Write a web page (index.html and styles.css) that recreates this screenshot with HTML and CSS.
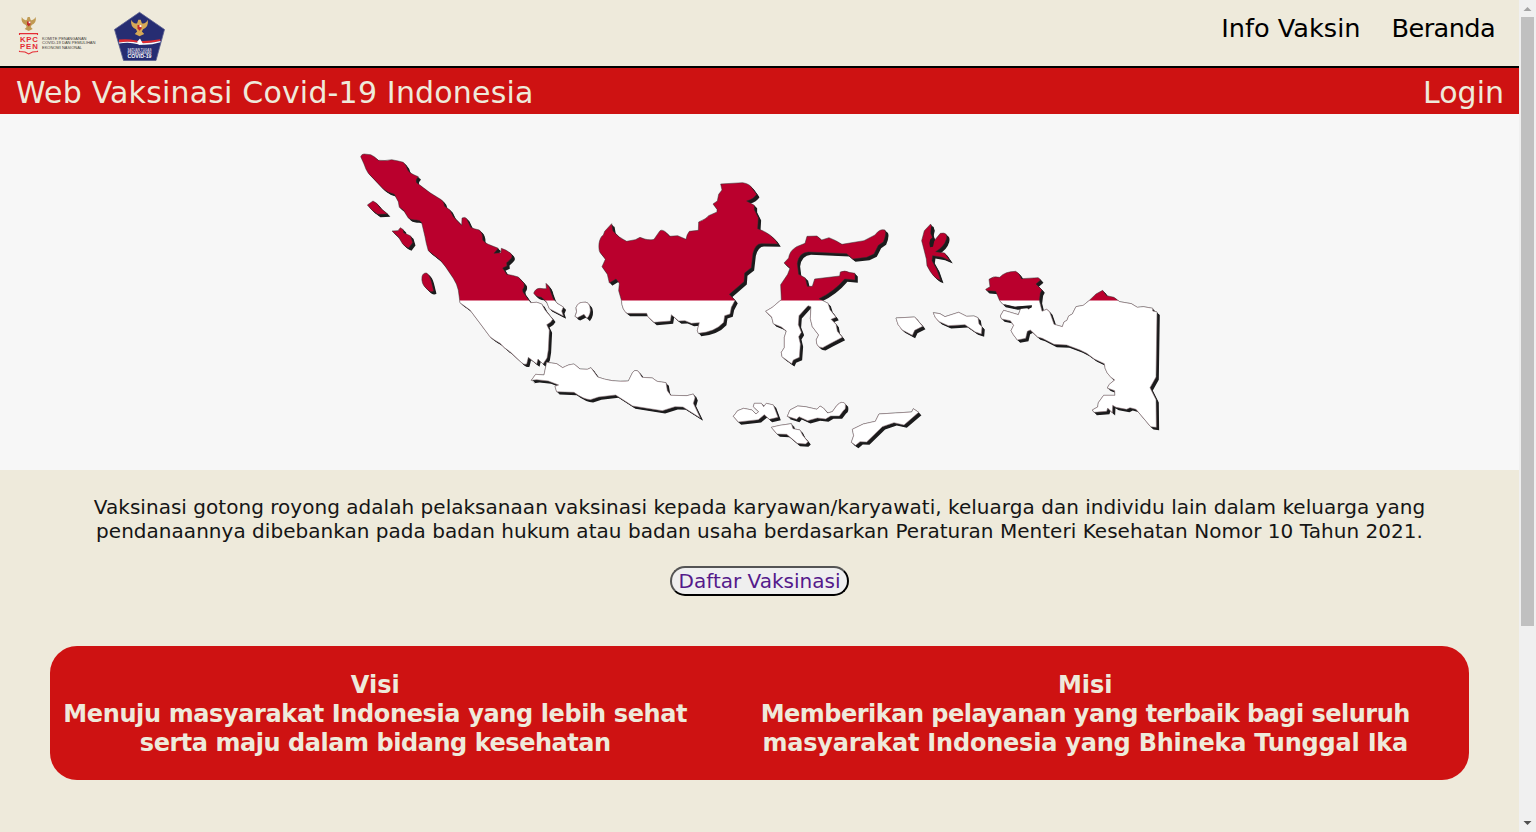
FILE: index.html
```html
<!DOCTYPE html>
<html lang="id">
<head>
<meta charset="utf-8">
<title>Web Vaksinasi Covid-19 Indonesia</title>
<link rel="stylesheet" href="styles.css">
</head>
<body>
<div class="page">
  <header class="top">
    <svg class="logos" width="180" height="66" viewBox="0 0 180 66">
      <defs>
        <g id="garuda">
          <path d="M-7-7Q-8-1-3 1L-2 3L-4 5L0 7L4 5L2 3L3 1Q8-1 7-7Q5-3 2-4L1-7H-1L-2-4Q-5-3-7-7Z"/>
          <path d="M-1.7-2.5H1.7V.5L0 2.4L-1.7 .5Z" fill="#c22b2b"/>
          <path d="M0-2.5H1.7V-.8H0Z" fill="#fff"/>
        </g>
      </defs>
      <use href="#garuda" x="28.7" y="24" fill="#c09a52"/>
      <g class="logo-red">
        <path d="M19.5 35V33.6H37.5V35M19.5 50.8V51.6L25 52L28.7 54L32.500 52L37.500 51.600V50.800" fill="none" stroke="#e52d35" stroke-width="1.1"/>
        <text x="20" y="42" textLength="17.8">KPC</text>
        <text x="20" y="49.2" textLength="17.8">PEN</text>
      </g>
      <g class="logo-caption">
        <text x="42" y="39.6" textLength="44.5" lengthAdjust="spacingAndGlyphs">KOMITE PENANGANAN</text>
        <text x="42" y="44.4" textLength="53.5" lengthAdjust="spacingAndGlyphs">COVID-19 DAN PEMULIHAN</text>
        <text x="42" y="49" textLength="40" lengthAdjust="spacingAndGlyphs">EKONOMI NASIONAL</text>
      </g>
      <path d="M139.5 12.3L164.5 29.5L156 60.5H123.5L114.5 29.5Z" fill="#262d72" stroke="#5b608f" stroke-width=".8"/>
      <use href="#garuda" transform="translate(139.5 28) scale(1.18)" fill="#d5a956"/>
      <path d="M119 39.500Q128 38.500 136 40.500Q145 42 160 39.300L160.500 41Q147 44 139 43Q128 40.500 119 42.600Z" fill="#df2c32"/>
      <path d="M119 42.600Q128 40.500 139 43Q147 44 160.500 41V42.200Q148 46 138 44.300Q129 41.600 119 43.600Z" fill="#fff"/>
      <path d="M137 42L140 38.500L143 44L139 45Z" fill="#fff"/>
      <g class="logo-badge">
        <text x="127.5" y="51.3" textLength="24" lengthAdjust="spacingAndGlyphs">SATUAN TUGAS</text>
        <text x="127.5" y="54.1" textLength="24" lengthAdjust="spacingAndGlyphs">PENANGANAN</text>
        <text class="covid" x="127.5" y="58.3" textLength="24" lengthAdjust="spacingAndGlyphs">COVID-19</text>
      </g>
    </svg>
    <nav class="nav"><a class="info">Info Vaksin</a><a class="home">Beranda</a></nav>
  </header>
  <div class="bar"><span class="brand">Web Vaksinasi Covid-19 Indonesia</span><span class="login">Login</span></div>
  <section class="hero">
    <svg width="1519" height="356" viewBox="0 114 1519 356">
      <defs>
        <clipPath id="lower"><rect x="0" y="300.4" width="1519" height="170"/></clipPath>
        <g id="islands">
          <path d="M360.700 156.700Q361.500 154 364 154L370.700 154.700Q374 156 378.300 160.300Q385 161 391.700 159.700Q399 161 403.300 162.300Q407 166 407.700 170L410 172.700Q414 175 418.300 176.700Q415 180 416.700 182.700L430 192.700L441.700 200Q445 203 444.300 206L450 210L453.300 216.700L461.700 225.300L462 218Q465 216.500 466.700 218.700L470.700 227.300Q474 229 479.300 230Q483 233 482.700 240Q485 243 488.300 244.300L498.300 248.300L494 253.300L501 252.700L501.300 248.300Q506 249.500 510.700 253.300Q513 256 511.500 258Q509 261 506.700 262.700L507 266L502.700 268L506.700 274.300Q512 275 518.300 277L524 283.300Q525 287 522.700 289.300L523 292L530.700 302.700L536.700 302.300L541.700 304L545 310L552.700 319.300Q551 323 546.700 324.700L549.300 330L548.300 350L547 358L543 364L538 359L536.700 364L528.300 357.300L526.700 364Q524 365 521.700 362.700L510 351.700Q504 348 500 343.300Q494 340 490 336.700L480 323.300L470 310L460 302.700L458.300 290Q457 284 453.300 278.300L445 266L440 260L428.300 250.700Q426 243 425 236.700L421.700 222.700Q420 220 416.700 220Q411 220 408.300 218L403.300 210L399.300 207.300L398.300 201.700L394.300 194.300Q388 193 383.300 189L368.300 173.300Q365.500 169 364 164Z"/>
          <g transform="translate(340 140) scale(.33333)">
            <path d="M82 195L99 183L110 190L122 205L143 222L113 223L98 212Z"/>
            <path d="M156 273L174 272L181 263L190 269L191 278L212 288L218 308L206 324Q198 322 188 312L176 292Z"/>
            <path d="M246 410Q249 398 260 399Q269 405 274 424L281 453Q270 460 258 444Q243 431 246 410Z"/>
          </g>
          <g transform="translate(440 230) scale(.33333)">
            <path d="M281 190Q286 175 300 175Q310 177 319 176L318 160Q329 169 332 185L340 207L353 221L370 231L365 243L370 258L328 236L320 216L304 202Q289 202 281 190Z"/>
            <path d="M408 233Q415 216 430 217Q444 214 449 228Q455 250 441 265L432 253L412 263L405 259Q413 245 408 233Z"/>
          </g>
          <g transform="translate(580 170) scale(.33333)">
            <path d="M74 184L95 161L99 183Q116 203 140 214L166 209L180 202Q205 213 222 208L240 182Q250 175 269 199L293 197L318 208Q321 192 328 184L355 181L356 156Q380 146 386 137L411 126L411 118L399 102L412 93L416 73L426 60L422 42L488 38Q510 42 516 54L530 73Q522 87 500 93L523 106L523 119L535 143L533 176Q578 192 594 222L545 221Q526 220 519 250L514 293L494 309L492 335L448 373L465 391L454 412L450 432L434 437L431 457Q405 486 355 490L352 481L358 458L334 460L315 452L296 453L288 446L274 434L271 453L222 457L204 440L200 430L142 430Q127 423 124 390L116 362L118 340L108 327L88 339L82 313L66 290L76 268L64 252Q55 247 57 221Q60 201 70 195Z"/>
          </g>
          <g transform="translate(750 220) scale(.33333)">
            <path d="M102 129L116 114Q118 93 140 80L165 70L171 49L201 48L215 60L237 53Q256 60 276 73L342 62L375 45Q389 25 405 30Q411 39 400 66L385 76L372 102L350 112L308 117L290 101L175 96Q146 98 142 131L146 163L166 174L172 199H187L194 177L269 168L271 156Q285 150 297 157L315 160L315 180L284 177Q251 216 207 236L234 250L240 269L258 292L243 298L258 313L262 334L277 352L240 371L218 383Q198 382 199 359L206 345L187 320L181 296L183 260L174 257L147 287L145 314L154 337L146 350L151 372L148 412L130 420L125 431L96 410L94 397L103 383V352L109 333L94 321L70 311L65 291L47 274L67 262L94 239L92 194L113 163L120 145Z"/>
            <path d="M515 62L523 32L542 12L546 24L542 40L552 63L571 40Q595 35 589 58Q583 80 557 95L584 99L600 122L577 112L548 107L546 122L560 147L572 181Q551 177 531 137L529 117L522 89Z"/>
            <path d="M438 294L494 291L518 319L494 331L487 346L457 330Q441 315 438 294Z"/>
          </g>
          <g transform="translate(880 210) scale(.33333)">
            <path d="M160 308L180 311L195 320L236 307L260 319L282 318L294 323L297 342L306 350L304 372L286 366L255 344L205 347L178 335Q163 323 160 308Z"/>
            <path d="M317 238L330 230L327 208Q340 196 359 202Q375 184 407 184Q420 191 424 206L475 203L482 210L468 222L486 240L481 249L478 272L486 304L500 298L509 306L522 343L547 350L552 336L561 331L566 318L577 312L588 290L610 286L627 272L648 252L668 241L680 257L702 262L719 275L754 281L772 292L790 290L818 295V303L831 306L828 501L810 533L828 569L829 652L812 650L768 598L750 593L740 598L708 592L698 586L697 608L683 594L680 604L642 607L637 600L653 591L655 578L671 556H705L704 542L682 534L688 523L704 510Q675 492 673 461L643 447L620 430L600 420L560 405L522 403L487 385L473 381L451 360L442 364L437 385L412 390L400 374L393 362L401 346L391 332L365 327L361 318L371 301L415 314L422 296L440 292L446 298L456 288L405 291L369 283L359 272L347 244L320 242Z"/>
          </g>
          <g transform="translate(520 350) scale(.33333)">
            <path d="M34 91L47 73L72 75L80 37L110 41L128 53Q147 42 162 42L180 57L202 58L213 53L233 81Q275 97 325 93L338 67Q348 55 358 68L366 82L397 84L411 94L438 98L442 122L452 136L501 137L520 132L525 143L520 160L541 204L489 171L465 170L427 182L338 168L287 135L236 141L211 149Q190 148 162 127L110 125L105 109L116 105L85 93L50 89Z"/>
          </g>
          <g transform="translate(720 390) scale(.33333)">
            <path d="M40 79L53 62L71 55L96 60L108 72L116 65L100 50L103 40H124L131 50L139 40L160 45L165 58L174 82L148 88L133 74L115 89L55 96Z"/>
            <path d="M202 79L210 60L233 48L256 50L291 58L300 48L310 54L323 69L337 65L350 47Q366 30 376 42Q379 58 370 62L358 78L332 78L317 87L292 84L263 92L237 80L230 88Z"/>
            <path d="M154 112L180 106L214 101L219 116L240 120L248 136L264 155L257 162L232 160L200 133L171 132Z"/>
            <path d="M397 118L430 102L466 94L477 72L575 66L580 56L596 67L552 105L522 98L487 110L440 156L420 155L407 166L394 157L401 137Z"/>
          </g>
        </g>
      </defs>
      <g fill="#1b1b1c">
        <use href="#islands" x="1" y="1"/>
        <use href="#islands" x="2" y="2"/>
        <use href="#islands" x="2.8" y="2.8"/>
      </g>
      <use class="coast" href="#islands" fill="#ba002d"/>
      <g clip-path="url(#lower)"><use class="coast pale" href="#islands" fill="#fff"/></g>
      <!-- inlets that cut into Halmahera and the Bird's Head -->
      <g fill="#1b1b1c">
        <path transform="translate(750 220) scale(.33333)" d="M543 22L550 20L548 34L554 58L549 80L540 82Q536 68 541 58L549 52L542 36Z"/>
        <path transform="translate(880 210) scale(.33333)" d="M369 282L405 290L456 286L454 294L405 297Z"/>
      </g>
    </svg>
  </section>
  <section class="intro">
    <p>Vaksinasi gotong royong adalah pelaksanaan vaksinasi kepada karyawan/karyawati, keluarga dan individu lain dalam keluarga yang<br>pendanaannya dibebankan pada badan hukum atau badan usaha berdasarkan Peraturan Menteri Kesehatan Nomor 10 Tahun 2021.</p>
    <button class="register">Daftar Vaksinasi</button>
  </section>
  <section class="card">
    <div class="col"><div>Visi</div><div class="vision">Menuju masyarakat Indonesia yang lebih sehat</div><div class="vision-end">serta maju dalam bidang kesehatan</div></div>
    <div class="col"><div>Misi</div><div class="mission">Memberikan pelayanan yang terbaik bagi seluruh</div><div class="mission-end">masyarakat Indonesia yang Bhineka Tunggal Ika</div></div>
  </section>
</div>
<div class="scrollbar">
  <svg width="17" height="17"><path d="M4.500 11L8.500 7L12.500 11Z" fill="#a3a3a3"/></svg>
  <div class="thumb"></div>
  <svg class="down" width="17" height="17"><path d="M4.500 6L8.500 10L12.500 6Z" fill="#505050"/></svg>
</div>
</body>
</html>
```

FILE: styles.css
```css
* { box-sizing: border-box; }
body {
  margin: 0;
  height: 832px;
  display: flex;
  overflow: hidden;
  background: #eeeadb;
  font-family: Verdana, "DejaVu Sans", sans-serif;
}
.page { width: 1519px; flex: none; }
.top {
  height: 68px;
  display: flex;
  justify-content: space-between;
  border-bottom: 2px solid #000;
}
.logos { display: block; }
.logo-red { font: bold 7.8px "Liberation Sans", sans-serif; fill: #e52d35; }
.logo-caption { font: 4.2px "Liberation Sans", sans-serif; fill: #3d3a36; }
.logo-badge { font: bold 3px "Liberation Sans", sans-serif; fill: #d4d5e2; }
.covid { font-size: 4.6px; fill: #fff; }
.nav {
  display: flex;
  gap: 31px;
  padding: 12px 24px 0 0;
  font-size: 25.6px;
  line-height: 32px;
  color: #000;
  white-space: nowrap;
}
.home { letter-spacing: -.6px; }
.bar {
  height: 46px;
  display: flex;
  justify-content: space-between;
  padding: 1px 15px 0 16px;
  background: #ce1212;
  color: #eeeadb;
  font-size: 30px;
  line-height: 48px;
  white-space: nowrap;
}
.brand { letter-spacing: .18px; }
.hero { height: 356px; background: #f7f7f7; overflow: hidden; }
.hero svg { display: block; }
.coast { stroke: #303030; stroke-width: .5px; stroke-linejoin: round; }
.pale { stroke: #777; }
#islands path { vector-effect: non-scaling-stroke; }
.intro {
  height: 176px;
  padding-top: 25px;
  display: flex;
  flex-direction: column;
  align-items: center;
  font-size: 20px;
  line-height: 24px;
  text-align: center;
  color: #151515;
}
.intro p { margin: 0 0 23px; white-space: nowrap; letter-spacing: .03px; }
.register {
  width: 179px;
  height: 30px;
  padding: 1px 0 0;
  border: 2px outset #000;
  border-radius: 15px;
  background: #efefef;
  color: #551a8b;
  font: 20px/25px Verdana, "DejaVu Sans", sans-serif;
  white-space: nowrap;
}
.card {
  height: 134px;
  margin: 0 50px;
  padding-top: 25px;
  display: flex;
  border-radius: 27px;
  background: #ce1212;
  color: #eeeadb;
  font-size: 24px;
  font-weight: bold;
  line-height: 29px;
  text-align: center;
}
.col { width: 50%; padding-right: 59px; white-space: nowrap; }
.col:last-child { padding-left: 1px; }
.vision { letter-spacing: -.38px; }
.vision-end { letter-spacing: -.46px; }
.mission { margin: 0 -12px; letter-spacing: -.52px; }
.mission-end { margin: 0 -12px; letter-spacing: -.22px; }
.scrollbar {
  width: 17px;
  height: 832px;
  flex: none;
  display: flex;
  flex-direction: column;
  align-items: center;
  background: #f0f0f0;
}
.thumb { width: 13px; height: 609px; background: #c0c0c0; }
.down { margin-top: auto; }
.scrollbar svg { flex: none; }
```
